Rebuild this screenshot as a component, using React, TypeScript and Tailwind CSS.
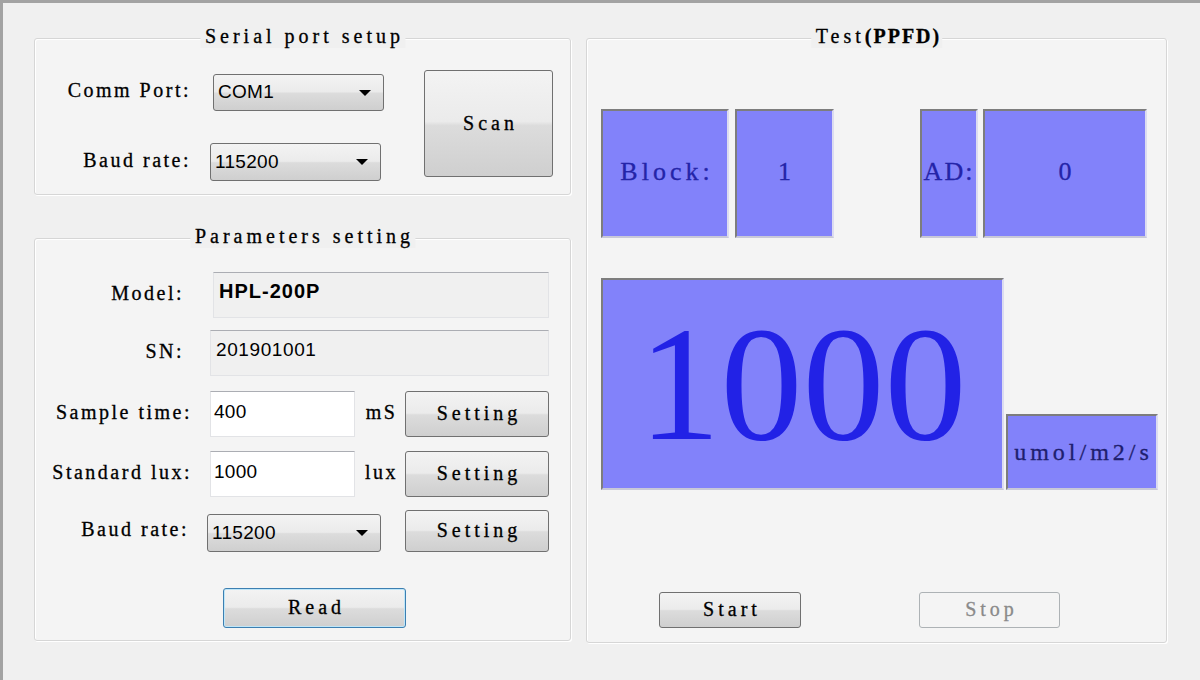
import React from "react";

// SimSun-style half width glyphs: closest installed look is a serif with wide tracking
const ssun =
  "font-['Liberation_Serif','Times_New_Roman',serif] [-webkit-text-stroke:0.3px_currentColor]";
const sans = "font-['Liberation_Sans',Arial,sans-serif]";

const btnBg =
  "bg-[linear-gradient(to_bottom,#f3f3f3_0%,#ebebeb_48%,#dcdcdc_52%,#cfcfcf_100%)]";

// Win7-ish etched group box with centred caption
const GroupBox = ({
  title,
  className,
  children,
}: {
  title: React.ReactNode;
  className?: string;
  children: React.ReactNode;
}) => (
  <div
    className={`relative rounded-[3px] border border-[#d6d6d6] shadow-[inset_1px_1px_0_#ffffff,1px_1px_0_#ffffff] bg-[#f4f4f4] ${className ?? ""}`}
  >
    <span
      className={`absolute -top-[15px] left-1/2 -translate-x-1/2 whitespace-nowrap bg-[#f0f0f0] pl-[5px] pr-[1px] text-[20px] leading-[24px] tracking-[4px] text-black ${ssun}`}
    >
      {title}
    </span>
    {children}
  </div>
);

const Combo = ({ value, className }: { value: string; className?: string }) => (
  <div
    className={`flex items-center justify-between rounded-[3px] border border-[#707070] ${btnBg} pl-[4px] pr-[12px] ${className ?? ""}`}
  >
    <span className={`text-[19px] text-black tracking-[0.3px] ${sans}`}>{value}</span>
    <span className="h-0 w-0 border-x-[6px] border-t-[6px] border-x-transparent border-t-black" />
  </div>
);

const Button = ({
  label,
  className,
}: {
  label: string;
  className?: string;
}) => (
  <button
    className={`flex items-center justify-center rounded-[3px] border border-[#707070] ${btnBg} pl-[4px] pb-[2px] text-[20px] tracking-[4px] text-black ${ssun} ${className ?? ""}`}
  >
    {label}
  </button>
);

const Label = ({ text, className }: { text: string; className?: string }) => (
  <span
    className={`pb-[5px] text-right text-[20px] tracking-[2.5px] text-black whitespace-nowrap ${ssun} ${className ?? ""}`}
  >
    {text}
  </span>
);

const ReadOnlyField = ({
  value,
  bold,
  className,
}: {
  value: string;
  bold?: boolean;
  className?: string;
}) => (
  <div
    className={`border border-[#e2e3e6] border-t-[#abadb3] bg-[#f0f0f0] pl-[5px] pt-[7px] ${className ?? ""}`}
  >
    <span
      className={`text-black leading-none ${bold ? `font-bold text-[20px] tracking-[1px] ${sans}` : `text-[19px] tracking-[0.6px] ${sans}`}`}
    >
      {value}
    </span>
  </div>
);

const TextInput = ({ value }: { value: string }) => (
  <div className="ml-[18px] h-[46px] w-[145px] border border-[#e2e3e6] border-t-[#abadb3] bg-white pl-[3px] pt-[8px]">
    <span className={`text-[19px] leading-none text-black tracking-[0.3px] ${sans}`}>{value}</span>
  </div>
);

const LcdBox = ({
  className,
  children,
}: {
  className?: string;
  children: React.ReactNode;
}) => (
  <div
    className={`flex items-center justify-center border-[2px] border-[#7d7d7d] border-r-[#dcdcf0] border-b-[#c8c8d8] bg-[#8282fa] ${className ?? ""}`}
  >
    {children}
  </div>
);

export default function App() {
  return (
    <div className="flex h-[680px] w-[1200px] gap-[15px] overflow-hidden border-t-[3px] border-l-[3px] border-[#a3a3a3] bg-[#f0f0f0] pl-[31px] pt-[35px]">
      {/* left column */}
      <div className="flex w-[537px] flex-col">
        <GroupBox title="Serial port setup" className="h-[157px]">
          <div className="flex pt-[31px]">
            <div className="flex flex-col pt-[4px]">
              <div className="flex h-[37px] items-center">
                <Label text="Comm Port:" className="w-[156px]" />
                <Combo value="COM1" className="ml-[22px] h-[37px] w-[171px]" />
              </div>
              <div className="mt-[32px] flex h-[38px] items-center">
                <Label text="Baud rate:" className="w-[156px]" />
                <Combo value="115200" className="ml-[19px] h-[38px] w-[171px]" />
              </div>
            </div>
            <Button label="Scan" className="ml-[40px] h-[107px] w-[129px]" />
          </div>
        </GroupBox>

        <GroupBox title="Parameters setting" className="mt-[43px] h-[403px]">
          <div className="flex flex-col pl-[5px] pt-[33px]">
            <div className="flex h-[46px] items-center">
              <Label text="Model:" className="w-[152px] pr-[8px]" />
              <ReadOnlyField value="HPL-200P" bold className="ml-[21px] h-[46px] w-[336px]" />
            </div>
            <div className="mt-[12px] flex h-[46px] items-center">
              <Label text="SN:" className="w-[152px] pr-[8px]" />
              <ReadOnlyField value="201901001" className="ml-[18px] h-[46px] w-[339px]" />
            </div>
            <div className="mt-[15px] flex h-[46px] items-center">
              <Label text="Sample time:" className="w-[152px]" />
              <TextInput value="400" />
              <span className={`w-[50px] pl-[3px] pb-[5px] text-center text-[20px] tracking-[2.5px] text-black ${ssun}`}>mS</span>
              <Button label="Setting" className="h-[46px] w-[144px]" />
            </div>
            <div className="mt-[14px] flex h-[46px] items-center">
              <Label text="Standard lux:" className="w-[152px]" />
              <TextInput value="1000" />
              <span className={`w-[50px] pl-[3px] pb-[5px] text-center text-[20px] tracking-[2.5px] text-black ${ssun}`}>lux</span>
              <Button label="Setting" className="h-[46px] w-[144px]" />
            </div>
            <div className="mt-[13px] flex h-[42px] items-center">
              <Label text="Baud rate:" className="w-[152px] pr-[3px]" />
              <Combo value="115200" className="ml-[15px] mt-[4px] h-[38px] w-[174px]" />
              <Button label="Setting" className="ml-[24px] h-[42px] w-[144px]" />
            </div>
            <button
              className={`ml-[183px] mt-[36px] flex h-[40px] w-[183px] items-center justify-center rounded-[3px] border border-[#3c7fb1] shadow-[inset_0_0_0_1px_#bfe6f8] ${btnBg} pl-[4px] pb-[2px] text-[20px] tracking-[4px] text-black ${ssun}`}
            >
              Read
            </button>
          </div>
        </GroupBox>
      </div>

      {/* right column */}
      <GroupBox
        title={
          <>
            Test<span className="font-bold tracking-[2px]">(PPFD)</span>
          </>
        }
        className="h-[605px] w-[581px]"
      >
        <div className="flex flex-col pl-[14px] pt-[70px]">
          <div className="flex h-[129px]">
            <LcdBox className="w-[128px] pl-[4px]">
              <span className={`pb-[4px] text-[26px] tracking-[4px] text-[#2424a8] ${ssun}`}>Block:</span>
            </LcdBox>
            <LcdBox className="ml-[6px] w-[99px]">
              <span className={`pb-[4px] text-[26px] text-[#2424a8] ${ssun}`}>1</span>
            </LcdBox>
            <LcdBox className="ml-[86px] w-[58px]">
              <span className={`pb-[4px] text-[26px] tracking-[2px] text-[#2424a8] ${ssun}`}>AD:</span>
            </LcdBox>
            <LcdBox className="ml-[5px] w-[164px]">
              <span className={`pb-[4px] text-[26px] text-[#2424a8] ${ssun}`}>0</span>
            </LcdBox>
          </div>

          <div className="mt-[40px] flex items-end">
            <LcdBox className="h-[212px] w-[403px]">
              <span className="font-['Liberation_Serif','Times_New_Roman',serif] text-[164px] leading-none text-[#2222e6]">
                1000
              </span>
            </LcdBox>
            <LcdBox className="ml-[2px] h-[76px] w-[152px] pl-[3px]">
              <span className={`text-[24px] tracking-[4px] text-[#1e1e6e] ${ssun}`}>umol/m2/s</span>
            </LcdBox>
          </div>

          <div className="mt-[102px] flex">
            <Button label="Start" className="ml-[58px] h-[36px] w-[142px]" />
            <button
              className={`ml-[118px] flex h-[36px] w-[141px] items-center justify-center rounded-[3px] border border-[#adb2b5] bg-[#f4f4f4] pl-[4px] pb-[2px] text-[20px] tracking-[4px] text-[#8a8a8a] ${ssun}`}
            >
              Stop
            </button>
          </div>
        </div>
      </GroupBox>
    </div>
  );
}
